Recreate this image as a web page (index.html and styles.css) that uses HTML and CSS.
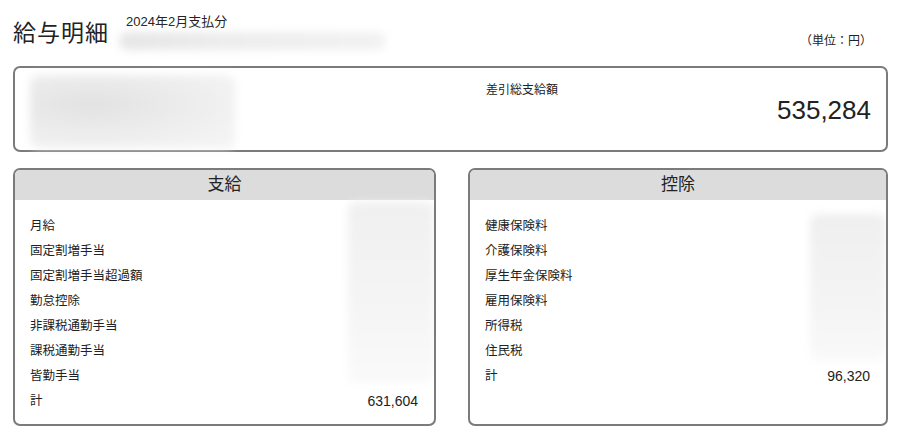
FILE: index.html
```html
<!DOCTYPE html>
<html lang="ja">

<head>
    <meta charset="UTF-8">
    <meta name="viewport" content="width=device-width, initial-scale=1.0">
    <title>給与明細</title>
    <link rel="stylesheet" href="styles.css">
</head>

<body>
    <div class="page">
        <header class="page-head">
            <h1>給与明細</h1>
            <div class="period">
                <span class="period-text">2024年2月支払分</span>
                <div class="mask mask-name"></div>
            </div>
            <div class="unit">（単位：円）</div>
        </header>

        <div class="net-box">
            <div class="mask mask-person"></div>
            <div class="net">
                <div class="net-label">差引総支給額</div>
                <div class="net-value">535,284</div>
            </div>
        </div>

        <div class="panels">
            <div class="panel">
                <div class="panel-head">支給</div>
                <ul class="rows">
                    <li><span>月給</span></li>
                    <li><span>固定割増手当</span></li>
                    <li><span>固定割増手当超過額</span></li>
                    <li><span>勤怠控除</span></li>
                    <li><span>非課税通勤手当</span></li>
                    <li><span>課税通勤手当</span></li>
                    <li><span>皆勤手当</span></li>
                    <li><span>計</span><span class="num">631,604</span></li>
                </ul>
                <div class="mask mask-pay"></div>
            </div>
            <div class="panel">
                <div class="panel-head">控除</div>
                <ul class="rows">
                    <li><span>健康保険料</span></li>
                    <li><span>介護保険料</span></li>
                    <li><span>厚生年金保険料</span></li>
                    <li><span>雇用保険料</span></li>
                    <li><span>所得税</span></li>
                    <li><span>住民税</span></li>
                    <li><span>計</span><span class="num">96,320</span></li>
                </ul>
                <div class="mask mask-deduct"></div>
            </div>
        </div>
    </div>
</body>

</html>
```

FILE: styles.css
```css
body {
    margin: 0;
    padding: 0;
    background-color: #fff;
    color: #222;
    font-family: "Liberation Sans", "Noto Sans CJK JP", sans-serif;
}

.page {
    width: 875px;
    margin-left: 13px;
}

.page-head {
    display: flex;
    align-items: flex-start;
    height: 66px;
}

h1 {
    margin: 21px 0 0;
    font-size: 23px;
    line-height: 24px;
    font-weight: normal;
    letter-spacing: 1px;
}

.period {
    margin: 13px 0 0 10px;
}

.period-text {
    display: block;
    padding-left: 7px;
    font-size: 13px;
    line-height: 17px;
}

.mask {
    filter: blur(4px);
}

.mask-name {
    width: 267px;
    height: 18px;
    margin-top: 2px;
    border-radius: 10px;
    background: linear-gradient(90deg, #e6e6e6, #ededed 40%, #f2f2f2);
}

.unit {
    margin: 33px 16px 0 auto;
    font-size: 12px;
    line-height: 16px;
}

.net-box {
    display: flex;
    height: 86px;
    box-sizing: border-box;
    padding: 7px 15px 0;
    border: 2px solid #7b7b7b;
    border-radius: 7px;
}

.mask-person {
    flex: none;
    width: 205px;
    height: 73px;
    border-radius: 8px;
    background: radial-gradient(ellipse at 30% 40%, #e2e2e2, #ececec 45%, #f3f3f3 80%);
}

.net {
    flex: 1;
    margin-left: 251px;
}

.net-label {
    margin-top: 7px;
    font-size: 12px;
    line-height: 16px;
}

.net-value {
    margin-top: -1px;
    text-align: right;
    font-size: 26px;
    line-height: 26px;
}

.panels {
    display: grid;
    grid-template-columns: 423px 420px;
    column-gap: 32px;
    margin-top: 16px;
}

.panel {
    position: relative;
    height: 258px;
    box-sizing: border-box;
    border: 2px solid #7b7b7b;
    border-radius: 7px;
    overflow: hidden;
}

.panel-head {
    height: 30px;
    background-color: #dcdcdc;
    text-align: center;
    font-size: 17px;
    line-height: 30px;
}

.rows {
    list-style: none;
    margin: 0;
    padding: 14px 16px 0 15px;
}

.rows li {
    display: flex;
    justify-content: space-between;
    font-size: 12.5px;
    line-height: 25px;
}

.num {
    font-size: 14px;
}

.mask-pay {
    position: absolute;
    top: 32px;
    right: 0;
    width: 86px;
    height: 182px;
    border-radius: 8px;
    background: linear-gradient(180deg, #f0f0f0, #f4f4f4 50%, #fafafa);
}

.mask-deduct {
    position: absolute;
    top: 44px;
    right: 0;
    width: 76px;
    height: 146px;
    border-radius: 8px;
    background: linear-gradient(180deg, #efefef, #f4f4f4 60%, #f9f9f9);
}
```
